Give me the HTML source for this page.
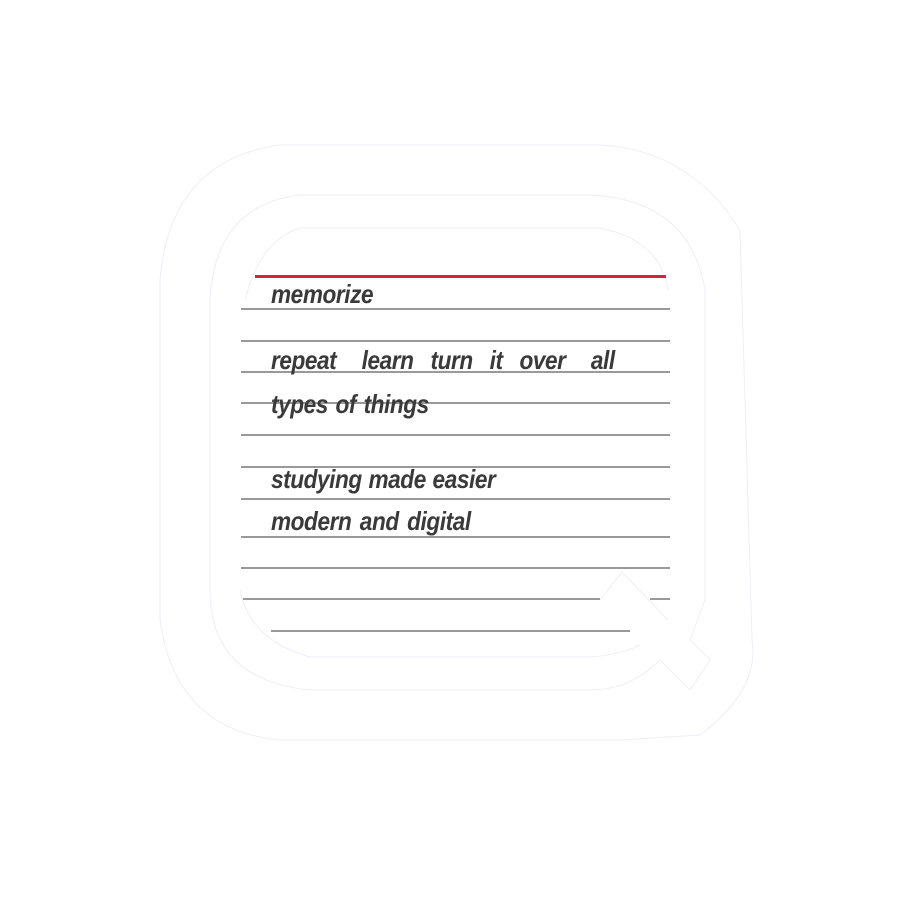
<!DOCTYPE html>
<html><head><style>
body{margin:0;width:906px;height:905px;background:#fff;position:relative;overflow:hidden;font-family:"Liberation Sans",sans-serif}
.l{position:absolute;height:2px;background:#999}
.t{position:absolute;left:271px;font-style:italic;font-weight:bold;color:#3a3a3a;font-size:26px;transform-origin:0 0;transform:scaleX(0.87);white-space:pre;letter-spacing:-0.5px}
</style></head><body>
<svg width="906" height="905" style="position:absolute;left:0;top:0" fill="none" stroke="#eeeef6" stroke-width="1">
<path d="M280 145 H600 Q690 150 740 230 L752 640 Q760 690 700 735 L620 740 H280 Q175 730 160 620 V280 Q170 160 280 145Z"/>
<path d="M300 195 H590 Q690 200 705 290 V600 L690 640 L710 660 L690 690 L660 660 Q630 690 590 690 H310 Q210 680 210 590 V300 Q215 205 300 195Z"/>
<path d="M300 228 H600 Q660 240 668 290 M245 300 Q260 240 300 228"/>
<path d="M240 590 Q250 640 310 657 H590 Q620 655 640 645"/>
<path d="M600 600 L622 572 L668 620"/>
</svg>
<div style="position:absolute;left:255px;top:275px;width:411px;height:3px;background:#d4262c"></div>
<div class="l" style="left:241px;top:308px;width:429px"></div>
<div class="l" style="left:241px;top:340px;width:429px"></div>
<div class="l" style="left:241px;top:371px;width:429px"></div>
<div class="l" style="left:241px;top:402px;width:429px"></div>
<div class="l" style="left:241px;top:434px;width:429px"></div>
<div class="l" style="left:241px;top:466px;width:429px"></div>
<div class="l" style="left:241px;top:498px;width:429px"></div>
<div class="l" style="left:241px;top:536px;width:429px"></div>
<div class="l" style="left:241px;top:567px;width:429px"></div>
<div class="l" style="left:243px;top:598px;width:357px"></div>
<div class="l" style="left:650px;top:598px;width:20px"></div>
<div class="l" style="left:271px;top:630px;width:359px"></div>
<div class="t" style="top:279px">memorize</div>
<div class="t" style="top:345px;word-spacing:3px">repeat   learn  turn  it  over   all</div>
<div class="t" style="top:389px;word-spacing:2px">types of things</div>
<div class="t" style="top:464px;word-spacing:1px">studying made easier</div>
<div class="t" style="top:506px;word-spacing:3px">modern and digital</div>
</body></html>
